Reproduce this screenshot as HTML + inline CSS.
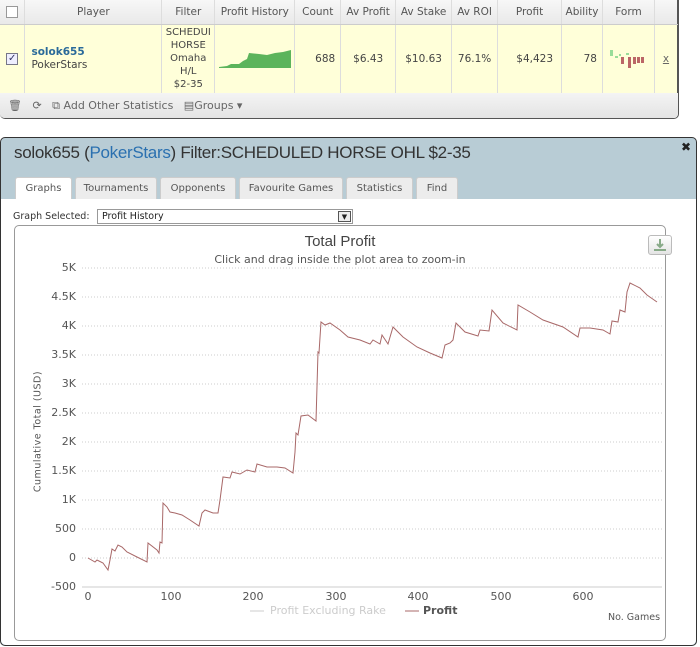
<!DOCTYPE html>
<html><head><meta charset="utf-8"><style>
*{margin:0;padding:0;box-sizing:border-box}
body{width:700px;height:647px;background:#fff;font-family:"DejaVu Sans","Liberation Sans",sans-serif;font-size:11px;color:#444;position:relative;overflow:hidden}
.abs{position:absolute}
table{border-collapse:collapse;position:absolute;left:0;top:0;width:678px}
td{border-right:1px solid #ddd;text-align:center;font-size:10.5px}
tr.h td{height:24px;background:linear-gradient(#f7f7f7,#e9e9e9);color:#555;border-bottom:1px solid #ccc}
tr.r td{height:69px;background:#ffffd9;border-bottom:1px solid #ddd}
.tabs div{position:absolute;top:177px;height:22px;background:#ececec;border:1px solid #ccc;border-bottom:none;font-size:10px;color:#555;text-align:center;line-height:21px;border-radius:3px 3px 0 0}
.yl{position:absolute;left:40px;width:36px;text-align:right;font-size:11px;color:#555}
.xl{position:absolute;top:590px;font-size:11px;color:#555;width:30px;text-align:center}
</style></head><body>
<div class="abs" style="left:0;top:0;width:679px;height:119px;border:1px solid #555;border-top:none;border-left:none;border-radius:0 0 5px 5px"></div>
<table>
<tr class="h"><td style="width:25px"><div style="width:12px;height:12px;border:1px solid #999;background:#fff;margin:auto"></div></td><td style="width:137px">Player</td><td style="width:53px">Filter</td><td style="width:80px">Profit History</td><td style="width:46px">Count</td><td style="width:55px">Av Profit</td><td style="width:56px">Av Stake</td><td style="width:46px">Av ROI</td><td style="width:64px">Profit</td><td style="width:41px">Ability</td><td style="width:52px">Form</td><td style="width:23px;border-right:1px solid #555"></td></tr>
<tr class="r"><td><div style="width:12px;height:12px;border:1px solid #778;background:#eef;margin:auto;font-size:10px;line-height:10px;color:#336">✓</div></td>
<td style="text-align:left;padding-left:6px;line-height:13px"><b style="color:#2a6a9a">solok655</b><br>PokerStars</td>
<td style="line-height:13px;font-size:10px;overflow:hidden;white-space:nowrap">SCHEDUI<br>HORSE<br>Omaha<br>H/L<br>$2-35</td>
<td><svg width="72" height="20" style="display:block;margin:auto"><path d="M0,18 L8,17 L12,15 L20,15 L24,12 L28,10 L30,4 L40,5 L48,6 L56,4 L64,3 L72,1 L72,19 L0,19Z" fill="#5cb45c"/></svg></td>
<td style="text-align:right;padding-right:5px">688</td><td>$6.43</td><td>$10.63</td><td>76.1%</td><td style="text-align:right;padding-right:8px">$4,423</td><td style="text-align:right;padding-right:5px">78</td>
<td><svg width="40" height="20" style="display:block;margin:auto"><rect x="2" y="1" width="3" height="6" fill="#9d9"/><rect x="7" y="7" width="3" height="2" fill="#9d9"/><rect x="11" y="5" width="2" height="2" fill="#9d9"/><rect x="13" y="8" width="3" height="7" fill="#b66"/><rect x="18" y="4" width="3" height="2" fill="#9d9"/><rect x="20" y="8" width="3" height="11" fill="#b66"/><rect x="25" y="8" width="3" height="7" fill="#b66"/><rect x="29" y="8" width="3" height="6" fill="#b66"/><rect x="33" y="8" width="3" height="6" fill="#b66"/></svg></td>
<td style="border-right:1px solid #555;text-decoration:underline;color:#666">x</td></tr>
</table>
<div class="abs" style="left:0;top:93px;width:678px;height:25px;background:linear-gradient(#f4f4f4,#e4e4e4);border-radius:0 0 5px 5px;color:#666;font-size:11px;line-height:25px;padding-left:8px">🗑&nbsp;&nbsp;&nbsp;⟳&nbsp;&nbsp;&nbsp;⧉ Add Other Statistics &nbsp;&nbsp;▤Groups ▾</div>

<div class="abs" style="left:0;top:137px;width:697px;height:509px;border:1px solid #333;border-radius:5px;background:#b8ccd5"></div>
<div class="abs" style="left:14px;top:143px;font-family:'Liberation Sans',sans-serif;font-size:17px;color:#333;letter-spacing:-0.3px">solok655 (<span style="color:#2a70b0">PokerStars</span>) Filter:SCHEDULED HORSE OHL $2-35</div>
<div class="abs" style="left:681px;top:140px;font-size:12px;font-weight:bold;color:#222">✖</div>
<div class="tabs"><div style="left:15px;width:57px;background:#fff;height:23px">Graphs</div><div style="left:75px;width:82px">Tournaments</div><div style="left:160px;width:76px">Opponents</div><div style="left:239px;width:104px">Favourite Games</div><div style="left:346px;width:67px">Statistics</div><div style="left:416px;width:42px">Find</div></div>
<div class="abs" style="left:1px;top:199px;width:695px;height:446px;background:#fff;border-radius:0 0 5px 5px"></div>
<div class="abs" style="left:13px;top:211px;font-size:9.5px;color:#333">Graph Selected:</div>
<div class="abs" style="left:97px;top:209px;width:256px;height:15px;border:1px solid #999;font-size:9.5px;padding-left:4px;line-height:13px;color:#222">Profit History<div style="position:absolute;right:1px;top:1px;width:13px;height:11px;border:1px solid #555;background:#eee;font-size:7px;text-align:center;line-height:10px">▼</div></div>
<div class="abs" style="left:14px;top:225px;width:652px;height:416px;border:1px solid #999;border-radius:5px"></div>
<div class="abs" style="left:0;top:233px;width:680px;text-align:center;font-size:15px;color:#444;font-family:'Liberation Sans',sans-serif">Total Profit</div>
<div class="abs" style="left:0;top:253px;width:680px;text-align:center;font-size:11px;color:#555">Click and drag inside the plot area to zoom-in</div>
<div class="abs" style="left:648px;top:235px;width:24px;height:20px;border:1px solid #bbb;border-radius:3px;background:linear-gradient(#fff,#e4e4e4)"><svg width="22" height="18"><path d="M11,3 L11,11 M8,8 L11,11 L14,8" stroke="#8a8" stroke-width="2" fill="none"/><rect x="5" y="13" width="12" height="2" fill="#8a8"/></svg></div>
<div class="yl" style="top:261px">5K</div><div class="yl" style="top:290px">4.5K</div><div class="yl" style="top:319px">4K</div><div class="yl" style="top:348px">3.5K</div><div class="yl" style="top:377px">3K</div><div class="yl" style="top:406px">2.5K</div><div class="yl" style="top:435px">2K</div><div class="yl" style="top:464px">1.5K</div><div class="yl" style="top:493px">1K</div><div class="yl" style="top:522px">500</div><div class="yl" style="top:551px">0</div><div class="yl" style="top:580px">-500</div>
<div class="abs" style="left:-32px;top:426px;width:140px;transform:rotate(-90deg);font-size:9.5px;color:#555;text-align:center;letter-spacing:0.5px">Cumulative Total (USD)</div>
<svg class="abs" style="left:0;top:0" width="700" height="647">
<g stroke="#ccc" stroke-dasharray="1,2" stroke-width="1">
<line x1="82" y1="268" x2="662" y2="268"/><line x1="82" y1="297" x2="662" y2="297"/><line x1="82" y1="326" x2="662" y2="326"/><line x1="82" y1="355" x2="662" y2="355"/><line x1="82" y1="384" x2="662" y2="384"/><line x1="82" y1="413" x2="662" y2="413"/><line x1="82" y1="442" x2="662" y2="442"/><line x1="82" y1="471" x2="662" y2="471"/><line x1="82" y1="500" x2="662" y2="500"/><line x1="82" y1="529" x2="662" y2="529"/><line x1="82" y1="558" x2="662" y2="558"/></g>
<line x1="82" y1="587" x2="662" y2="587" stroke="#ccc"/>
<polyline fill="none" stroke="#a86868" stroke-width="1" points="88,558 95,562 97,560 103,563 108,570 110,560 112,549 115,551 118,545 122,547 127,552 137,557 147,562 148,543 157,550 159,553 160,542 162,543 163,503 167,507 170,512 175,513 182,515 190,520 199,526 202,513 205,510 213,513 218,513 220,500 223,477 230,478 232,472 240,474 247,470 255,472 257,464 267,467 277,467 285,468 293,473 295,452 296,433 298,435 301,416 308,415 316,421 318,352 319,353 321,322 325,325 330,323 340,330 348,337 360,340 370,344 373,340 380,344 382,335 388,344 393,327 403,337 417,347 430,353 442,358 445,345 450,343 453,340 456,323 465,332 478,336 480,330 489,331 492,310 503,323 517,330 518,305 530,312 543,320 563,327 578,337 580,328 590,328 603,330 610,334 612,321 618,322 620,310 625,312 627,292 630,283 640,288 647,295 657,302"/>
<line x1="250" y1="611" x2="264" y2="611" stroke="#ccc"/><line x1="405" y1="611" x2="419" y2="611" stroke="#a86868"/>
</svg>
<div class="xl" style="left:73px">0</div><div class="xl" style="left:156px">100</div><div class="xl" style="left:238px">200</div><div class="xl" style="left:321px">300</div><div class="xl" style="left:403px">400</div><div class="xl" style="left:486px">500</div><div class="xl" style="left:568px">600</div>
<div class="abs" style="left:270px;top:604px;font-size:11px;color:#ccc">Profit Excluding Rake</div>
<div class="abs" style="left:423px;top:604px;font-size:11px;color:#555;font-weight:bold">Profit</div>
<div class="abs" style="left:608px;top:612px;font-size:9.5px;color:#555">No. Games</div>
</body></html>
